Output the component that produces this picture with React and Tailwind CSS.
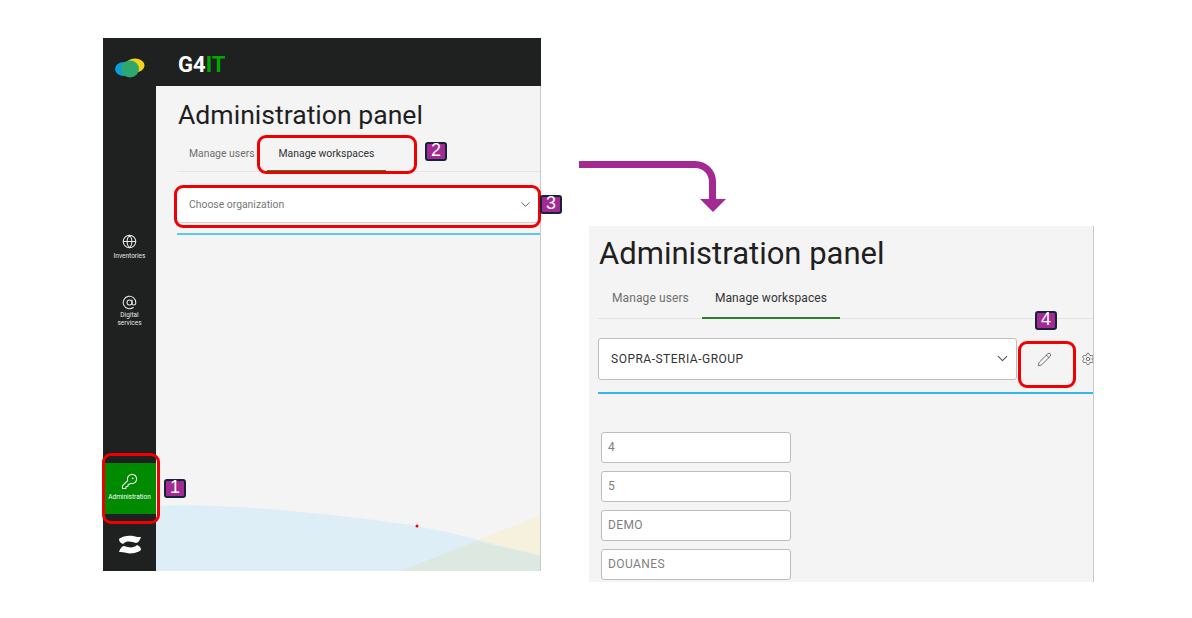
import React from 'react';
import { AtSign, ChevronDown, Globe, KeyRound, Pencil, Settings } from 'lucide-react';

const WORKSPACES = ['4', '5', 'DEMO', 'DOUANES'];

const Callout = ({ className, children }) => (
  <div className={`absolute flex h-[19px] w-[22px] items-center justify-center rounded-[3px] border-2 border-[#14233c] bg-[#a32a92] pb-[3px] font-['Liberation_Sans',sans-serif] text-[18px] leading-none text-white ${className}`}>
    {children}
  </div>
);

const RedBox = ({ className }) => (
  <div className={`absolute rounded-[9px] border-[3px] border-[#f00000] ${className}`} />
);

const App = () => {
  return (
    <div className="relative h-[618px] w-[1192px] overflow-hidden bg-white font-['Roboto',sans-serif]">
      {/* Left capture */}
      <div className="absolute left-[103px] top-[38px] flex h-[533px] w-[438px] bg-[#1e211f]">
        <aside className="flex w-[53px] flex-col items-center">
          <svg width="30" height="20" viewBox="0 0 30 20" className="mt-[20px]">
            <ellipse cx="9" cy="11" rx="9" ry="7" fill="#0a9ddb" />
            <ellipse cx="20" cy="7.500" rx="9.500" ry="7" fill="#f5d316" />
            <ellipse cx="15" cy="11" rx="9" ry="8.500" fill="#2fa86f" />
          </svg>
          <div className="mt-[156px] flex flex-col items-center text-[#e6e6e6]">
            <Globe size={15} strokeWidth={1.7} />
            <span className="mt-[3px] text-[6.5px] leading-[8px]">Inventories</span>
          </div>
          <div className="mt-[35px] flex flex-col items-center text-[#e6e6e6]">
            <AtSign size={15} strokeWidth={1.7} />
            <span className="mt-px text-center text-[6.5px] leading-[8px]">Digital<br />services</span>
          </div>
          <div className="mt-[136px] flex h-[51px] w-[53px] flex-col items-center bg-[#008a00] pt-[10px] text-white">
            <KeyRound size={17} strokeWidth={1.5} />
            <span className="mt-[3px] text-[6.5px] leading-[8px]">Administration</span>
          </div>
          <svg width="24" height="19" viewBox="0 0 24 19" className="mt-[21px]">
            <path d="M1 4C4 1 12 0 15 1c3 1 6 1 8 1-1 3-3 6-5 6C14 7 9 5 5 9 3 8 1 7 1 4Z" fill="#fff" />
            <path d="M1 4C4 1 12 0 15 1c3 1 6 1 8 1-1 3-3 6-5 6C14 7 9 5 5 9 3 8 1 7 1 4Z" fill="#fff" transform="rotate(180 12 9.500)" />
          </svg>
        </aside>
        <div className="flex min-w-0 flex-1 flex-col">
          <header className="flex h-[48px] items-center pl-[22px] pt-[5px] text-[22px] font-bold text-white">
            G4<span className="text-[#00a800]">IT</span>
          </header>
          <main className="relative flex-1 overflow-hidden border-r border-[#c8c8c8] bg-[#f4f4f4] pl-[21px]">
            <svg className="absolute inset-0" width="385" height="485" viewBox="0 0 385 485">
              <path d="M385 429L244 485H385Z" fill="#f5f1dc" />
              <path d="M0 420C60 416 180 428 261 440 300 447 340 459 385 470V485H0Z" fill="#ddeef6" />
              <path d="M320 455C340 460 360 464 385 470V485H244Z" fill="#dde9e0" />
              <circle cx="261" cy="440" r="1.5" fill="#f00000" />
            </svg>
            <div className="relative">
              <h1 className="ml-px pt-[11px] pb-px text-[26.600px] leading-[36px] text-[#1f1f1f]">Administration panel</h1>
              <div className="flex h-[38px] border-b border-[#e6e6e6] text-[10.400px] text-[#6f6f6f]">
                <span className="ml-[12px] pt-[12px]">Manage users</span>
                <span className="ml-[12px] -mb-px h-[38px] border-b-2 border-[#2c7d2c] px-[12px] pt-[12px] text-[#333]">Manage workspaces</span>
              </div>
              <div className="mt-[15px] flex h-[36px] items-center justify-between rounded-[2px] border-b border-[#cfcfcf] bg-white pl-[12px] pr-[7px] text-[10.400px] text-[#777]">
                Choose organization
                <ChevronDown size={15} strokeWidth={1.6} className="text-[#666]" />
              </div>
              <div className="mt-[10px] h-[2px] bg-[#5cc8ea]" />
            </div>
          </main>
        </div>
      </div>

      {/* Right capture */}
      <div className="absolute left-[589px] top-[226px] h-[356px] w-[505px] overflow-hidden border-r border-[#c8c8c8] bg-[#f4f4f4] pl-[9px]">
        <h1 className="ml-px pt-[8px] text-[31px] leading-[40px] text-[#1f1f1f]">Administration panel</h1>
        <div className="flex h-[45px] border-b border-[#e2e2e2] text-[12px] tracking-[0.1px] text-[#6f6f6f]">
          <span className="ml-[14px] pt-[15px]">Manage users</span>
          <span className="ml-[13px] -mb-px h-[45px] border-b-2 border-[#2c7d2c] px-[13px] pt-[15px] text-[#333]">Manage workspaces</span>
        </div>
        <div className="mt-[19px] flex items-center">
          <div className="flex h-[42px] w-[419px] shrink-0 items-center justify-between rounded-[3px] border border-[#bdbdbd] bg-white pb-px pl-[12px] pr-[5px] text-[12px] tracking-[0.5px] text-[#333]">
            SOPRA-STERIA-GROUP
            <ChevronDown size={17} strokeWidth={1.6} className="text-[#555]" />
          </div>
          <Pencil size={15} strokeWidth={1.3} className="ml-[20px] shrink-0 text-[#555]" />
          <Settings size={14} strokeWidth={1.3} className="ml-[29px] shrink-0 text-[#555]" />
        </div>
        <div className="mt-[12px] h-[2px] bg-[#35b6e8]" />
        <div className="mt-[38px] flex flex-col gap-[8px] pl-[3px]">
          {WORKSPACES.map(name => (
            <div key={name} className="flex h-[31px] w-[190px] items-center rounded-[3px] border border-[#bdbdbd] bg-white pb-px pl-[6px] text-[12px] tracking-[0.4px] text-[#808080]">
              {name}
            </div>
          ))}
        </div>
      </div>

      {/* Arrow between captures */}
      <svg className="absolute left-[575px] top-[155px]" width="155" height="60" viewBox="0 0 155 60">
        <path d="M4 9.500H120C130 9.500 137.500 17 137.500 27V45" fill="none" stroke="#a32a92" strokeWidth="7" />
        <path d="M125 44H151L138 57Z" fill="#a32a92" />
      </svg>

      {/* Annotations */}
      <RedBox className="left-[102px] top-[453px] h-[71px] w-[58px]" />
      <RedBox className="left-[257px] top-[135px] h-[39px] w-[160px]" />
      <RedBox className="left-[174px] top-[185px] h-[43px] w-[367px]" />
      <RedBox className="left-[1018px] top-[341px] h-[47px] w-[58px]" />
      <Callout className="left-[164px] top-[479px]">1</Callout>
      <Callout className="left-[425px] top-[142px]">2</Callout>
      <Callout className="left-[540px] top-[195px]">3</Callout>
      <Callout className="left-[1035px] top-[311px]">4</Callout>
    </div>
  );
};

export default App;
